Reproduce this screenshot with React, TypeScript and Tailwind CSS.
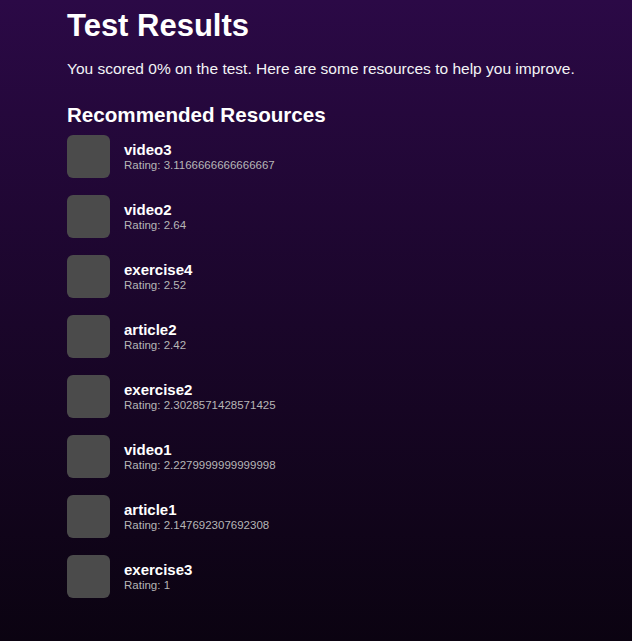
const resources = [
  { name: 'video3', rating: '3.1166666666666667' },
  { name: 'video2', rating: '2.64' },
  { name: 'exercise4', rating: '2.52' },
  { name: 'article2', rating: '2.42' },
  { name: 'exercise2', rating: '2.3028571428571425' },
  { name: 'video1', rating: '2.2279999999999998' },
  { name: 'article1', rating: '2.147692307692308' },
  { name: 'exercise3', rating: '1' },
];

const App = () => {
  return (
    <div className="min-h-screen bg-gradient-to-b from-[#2b0946] to-[#0b0311] font-['Liberation_Sans',Arial,sans-serif] text-white">
      <div className="pl-[67px] pt-[8px]">
        <h1 className="text-[31px] leading-[36px] font-bold">Test Results</h1>
        <p className="mt-[14px] text-[15.5px] leading-[22px] text-gray-100">
          You scored 0% on the test. Here are some resources to help you improve.
        </p>
        <h2 className="mt-[22px] text-[20.6px] leading-[26px] font-bold">Recommended Resources</h2>
        <ul className="mt-[7px] flex flex-col gap-[17px]">
          {resources.map((r) => (
            <li key={r.name} className="flex items-center gap-[14px]">
              <div className="w-[43px] h-[43px] rounded-md bg-[#4b4b4b]" />
              <div className="flex flex-col">
                <span className="text-[15px] leading-[16px] font-bold">{r.name}</span>
                <span className="text-[11.5px] leading-[14px] text-[#b6b6b6]">Rating: {r.rating}</span>
              </div>
            </li>
          ))}
        </ul>
      </div>
    </div>
  );
};

export default App;
